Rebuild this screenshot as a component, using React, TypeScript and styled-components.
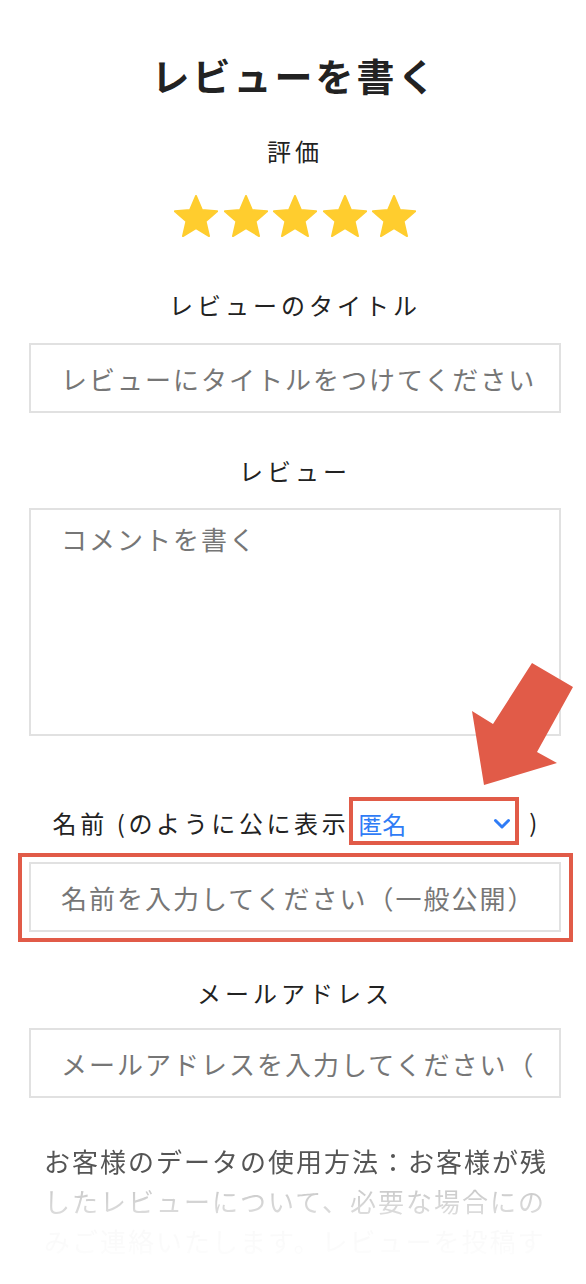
import React from "react";
import styled, { createGlobalStyle } from "styled-components";

const GlobalStyle = createGlobalStyle`
  html, body {
    margin: 0;
    padding: 0;
    background: #ffffff;
    overflow: hidden;
  }
  body {
    font-family: "Noto Sans CJK JP", "Noto Sans", sans-serif;
    color: #222222;
  }
  * { box-sizing: border-box; }
`;

const RED = "#e15b48";

const Page = styled.div`
  position: relative;
  width: 586px;
  height: 1284px;
  overflow: hidden;
  padding: 51px 25px 0 29px;
  display: flex;
  flex-direction: column;
`;

const Title = styled.h1`
  margin: 0;
  font-size: 38px;
  line-height: 48px;
  font-weight: 700;
  letter-spacing: 3px;
  text-align: center;
  color: #222222;
`;

const Label = styled.div<{ $mt: number }>`
  margin-top: ${(p) => p.$mt}px;
  font-size: 24px;
  line-height: 32px;
  letter-spacing: 4px;
  text-align: center;
  color: #222222;
`;

const Stars = styled.div`
  margin-top: 28px;
  display: flex;
  justify-content: center;
  gap: 5.5px;
  height: 42px;
`;

const StarSvg = styled.svg`
  width: 44px;
  height: 42px;
  display: block;
`;

const fieldBase = `
  width: 100%;
  border: 2px solid #e1e1e1;
  border-radius: 0;
  background: #ffffff;
  font-family: "Noto Sans CJK JP", "Noto Sans", sans-serif;
  font-size: 26px;
  letter-spacing: 2px;
  color: #333333;
  outline: none;
  &::placeholder {
    color: #767676;
    opacity: 1;
  }
`;

const TextInput = styled.input<{ $mt: number }>`
  ${fieldBase}
  margin-top: ${(p) => p.$mt}px;
  height: 70px;
  padding: 0 24px 0 30px;
  flex-shrink: 0;
`;

const TextArea = styled.textarea`
  ${fieldBase}
  margin-top: 21px;
  height: 228px;
  padding: 11px 18px 0 30px;
  line-height: 36px;
  resize: none;
  flex-shrink: 0;
`;

const NameRow = styled.div`
  margin-top: 61px;
  height: 48px;
  display: flex;
  justify-content: center;
  align-items: center;
  flex-shrink: 0;
`;

const NameLabel = styled.span`
  font-size: 24px;
  line-height: 32px;
  letter-spacing: 3.6px;
  color: #222222;
  margin-top: 4px;
`;

const SelectBox = styled.div`
  width: 170px;
  height: 48px;
  border: 4px solid ${RED};
  background: #ffffff;
  display: flex;
  align-items: center;
  justify-content: space-between;
  padding: 5px 4px 0 5px;
  color: #2f7cf6;
  font-size: 24px;
  line-height: 32px;
  flex-shrink: 0;
`;

const CloseParen = styled.span`
  margin-left: 10px;
  margin-top: 2px;
  font-size: 24px;
  line-height: 32px;
  color: #222222;
`;

const Highlight = styled.div`
  margin: 8px -12px 0 -11px;
  border: 4px solid ${RED};
  padding: 5px 8px 6px 7px;
  display: flex;
  flex-shrink: 0;
`;

const Notice = styled.p`
  margin: 43px 0 0;
  padding: 0 9px 0 15px;
  max-height: 120px;
  overflow: hidden;
  font-size: 26px;
  line-height: 40px;
  letter-spacing: 2px;
  color: #555555;
  flex-shrink: 0;
  -webkit-mask-image: linear-gradient(
    to bottom,
    #000 0px,
    #000 36px,
    rgba(0, 0, 0, 0.3) 50px,
    rgba(0, 0, 0, 0.2) 74px,
    rgba(0, 0, 0, 0.035) 88px,
    rgba(0, 0, 0, 0.02) 112px,
    transparent 122px
  );
  mask-image: linear-gradient(
    to bottom,
    #000 0px,
    #000 36px,
    rgba(0, 0, 0, 0.3) 50px,
    rgba(0, 0, 0, 0.2) 74px,
    rgba(0, 0, 0, 0.035) 88px,
    rgba(0, 0, 0, 0.02) 112px,
    transparent 122px
  );
`;

const ArrowSvg = styled.svg`
  position: absolute;
  left: 460px;
  top: 655px;
  width: 126px;
  height: 140px;
  pointer-events: none;
`;

const Star = () => (
  <StarSvg viewBox="1.6 1.6 20.8 19.8" aria-hidden="true">
    <path
      d="M12 17.27L18.18 21l-1.64-7.03L22 9.24l-7.19-.61L12 2 9.19 8.63 2 9.24l5.46 4.73L5.82 21z"
      fill="#ffcd2e"
      stroke="#ffcd2e"
      strokeWidth="0.9"
      strokeLinejoin="round"
    />
  </StarSvg>
);

const Chevron = () => (
  <svg width="18" height="12" viewBox="0 0 18 12" aria-hidden="true">
    <path
      d="M2.5 2.5 L9 9 L15.5 2.5"
      fill="none"
      stroke="#2f7cf6"
      strokeWidth="3"
      strokeLinecap="round"
      strokeLinejoin="round"
    />
  </svg>
);

export default function App() {
  return (
    <>
      <GlobalStyle />
      <Page>
        <Title>レビューを書く</Title>
        <Label $mt={36}>評価</Label>
        <Stars>
          {[0, 1, 2, 3, 4].map((i) => (
            <Star key={i} />
          ))}
        </Stars>
        <Label $mt={52}>レビューのタイトル</Label>
        <TextInput $mt={22} placeholder="レビューにタイトルをつけてください" />
        <Label $mt={42}>レビュー</Label>
        <TextArea placeholder="コメントを書く" />
        <NameRow>
          <NameLabel>名前 (のように公に表示</NameLabel>
          <SelectBox>
            <span>匿名</span>
            <Chevron />
          </SelectBox>
          <CloseParen>)</CloseParen>
        </NameRow>
        <Highlight>
          <TextInput $mt={0} placeholder="名前を入力してください（一般公開）" />
        </Highlight>
        <Label $mt={35}>メールアドレス</Label>
        <TextInput $mt={19} placeholder="メールアドレスを入力してください（一般非公開）" />
        <Notice>
          お客様のデータの使用方法：お客様が残したレビューについて、必要な場合にのみご連絡いたします。レビューを投稿することにより、お客様は当ストアの利用規約およびプライバシーポリシーに同意したものとみなされます。
        </Notice>
        <ArrowSvg viewBox="0 0 126 140" aria-hidden="true">
          <polygon
            points="72,8 113,32 77,97 97,108 24,130 12,56 33,69"
            fill={RED}
          />
        </ArrowSvg>
      </Page>
    </>
  );
}
